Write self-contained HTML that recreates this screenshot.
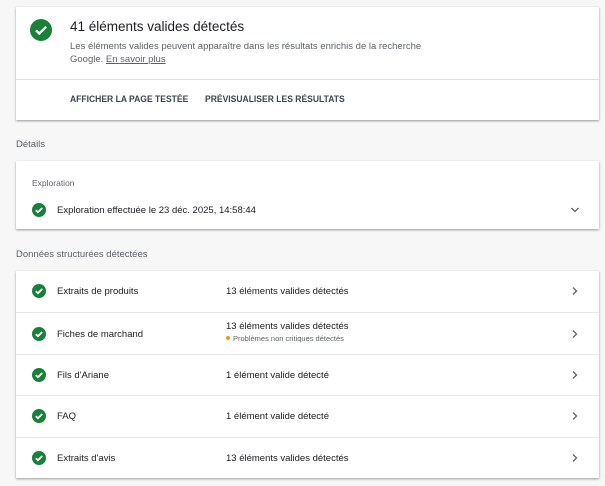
<!DOCTYPE html>
<html><head><meta charset="utf-8"><style>
*{margin:0;padding:0;box-sizing:border-box}
body{width:605px;height:486px;background:#f7f7f7;font-family:"Liberation Sans",Arial,sans-serif;color:#202124;position:relative;overflow:hidden}
.card{position:absolute;left:16px;width:583px;background:#fff;box-shadow:0 1px 2px rgba(0,0,0,.3),0 1px 3px rgba(0,0,0,.1)}
.abs{position:absolute;white-space:nowrap}
.row{position:absolute;left:0;width:583px;height:41px;border-top:1px solid #e8e8e8}
.row:first-child{border-top:none}
.t{font-size:9.5px}
.btn{font-size:9.5px;font-weight:bold;color:#3c4650;transform:scaleX(0.9);transform-origin:left}
</style></head><body>
<div class="card" style="top:7px;height:113px">
 <svg class="abs" style="left:14px;top:12px" width="22" height="22" viewBox="0 0 22 22"><circle cx="11" cy="11" r="11" fill="#188038"/><path d="M6 11.3l3.3 3.3 6.8-6.8" stroke="#fff" stroke-width="2.4" fill="none"/></svg>
 <div class="abs" style="left:54px;top:12px;font-size:13.5px">41 éléments valides détectés</div>
 <div class="abs" style="left:54px;top:33px;font-size:9.5px;color:#5f6368;line-height:13px">Les éléments valides peuvent apparaître dans les résultats enrichis de la recherche<br>Google. <u>En savoir plus</u></div>
 <div class="abs" style="left:0;top:72px;width:583px;border-top:1px solid #e0e0e0"></div>
 <div class="abs btn" style="left:54px;top:87px">AFFICHER LA PAGE TESTÉE</div>
 <div class="abs btn" style="left:189px;top:87px">PRÉVISUALISER LES RÉSULTATS</div>
</div>
<div class="abs" style="left:16px;top:139px;font-size:9.5px;color:#5f6368">Détails</div>
<div class="card" style="top:161px;height:68px">
 <div class="abs" style="left:16px;top:17px;font-size:8.5px;color:#5f6368">Exploration</div>
 <svg class="abs" style="left:16px;top:42px" width="14" height="14" viewBox="0 0 22 22"><circle cx="11" cy="11" r="11" fill="#188038"/><path d="M6 11.3l3.3 3.3 6.8-6.8" stroke="#fff" stroke-width="2.8" fill="none"/></svg>
 <div class="abs t" style="left:41px;top:44px">Exploration effectuée le 23 déc. 2025, 14:58:44</div>
 <svg class="abs" style="top:45px;left:554px" width="10" height="8" viewBox="0 0 10 8"><path d="M1.5 2l3.5 3.5 3.5-3.5" stroke="#5f6368" stroke-width="1.3" fill="none"/></svg>
</div>
<div class="abs" style="left:16px;top:249px;font-size:9.5px;color:#5f6368">Données structurées détectées</div>
<div class="card" style="top:271px;height:207px">
 <div class="row" style="top:0"><svg class="abs" style="left:16px;top:13px" width="14" height="14" viewBox="0 0 22 22"><circle cx="11" cy="11" r="11" fill="#188038"/><path d="M6 11.3l3.3 3.3 6.8-6.8" stroke="#fff" stroke-width="2.8" fill="none"/></svg><div class="abs t" style="left:41px;top:15px">Extraits de produits</div><div class="abs t" style="left:210px;top:15px">13 éléments valides détectés</div><svg class="abs" style="left:555px;top:15px" width="8" height="10" viewBox="0 0 8 10"><path d="M2 1.5l3.5 3.5-3.5 3.5" stroke="#5f6368" stroke-width="1.3" fill="none"/></svg></div>
 <div class="row" style="top:41px;height:42px"><svg class="abs" style="left:16px;top:14px" width="14" height="14" viewBox="0 0 22 22"><circle cx="11" cy="11" r="11" fill="#188038"/><path d="M6 11.3l3.3 3.3 6.8-6.8" stroke="#fff" stroke-width="2.8" fill="none"/></svg><div class="abs t" style="left:41px;top:16px">Fiches de marchand</div><div class="abs t" style="left:210px;top:8px">13 éléments valides détectés</div><div class="abs" style="left:210px;top:21px;font-size:7.5px;color:#5f6368"><span style="display:inline-block;width:4px;height:4px;border-radius:2px;background:#f29900;margin-right:3px;vertical-align:1px"></span>Problèmes non critiques détectés</div><svg class="abs" style="left:555px;top:16px" width="8" height="10" viewBox="0 0 8 10"><path d="M2 1.5l3.5 3.5-3.5 3.5" stroke="#5f6368" stroke-width="1.3" fill="none"/></svg></div>
 <div class="row" style="top:83px"><svg class="abs" style="left:16px;top:13px" width="14" height="14" viewBox="0 0 22 22"><circle cx="11" cy="11" r="11" fill="#188038"/><path d="M6 11.3l3.3 3.3 6.8-6.8" stroke="#fff" stroke-width="2.8" fill="none"/></svg><div class="abs t" style="left:41px;top:15px">Fils d'Ariane</div><div class="abs t" style="left:210px;top:15px">1 élément valide détecté</div><svg class="abs" style="left:555px;top:15px" width="8" height="10" viewBox="0 0 8 10"><path d="M2 1.5l3.5 3.5-3.5 3.5" stroke="#5f6368" stroke-width="1.3" fill="none"/></svg></div>
 <div class="row" style="top:124px"><svg class="abs" style="left:16px;top:13px" width="14" height="14" viewBox="0 0 22 22"><circle cx="11" cy="11" r="11" fill="#188038"/><path d="M6 11.3l3.3 3.3 6.8-6.8" stroke="#fff" stroke-width="2.8" fill="none"/></svg><div class="abs t" style="left:41px;top:15px">FAQ</div><div class="abs t" style="left:210px;top:15px">1 élément valide détecté</div><svg class="abs" style="left:555px;top:15px" width="8" height="10" viewBox="0 0 8 10"><path d="M2 1.5l3.5 3.5-3.5 3.5" stroke="#5f6368" stroke-width="1.3" fill="none"/></svg></div>
 <div class="row" style="top:166px"><svg class="abs" style="left:16px;top:13px" width="14" height="14" viewBox="0 0 22 22"><circle cx="11" cy="11" r="11" fill="#188038"/><path d="M6 11.3l3.3 3.3 6.8-6.8" stroke="#fff" stroke-width="2.8" fill="none"/></svg><div class="abs t" style="left:41px;top:15px">Extraits d'avis</div><div class="abs t" style="left:210px;top:15px">13 éléments valides détectés</div><svg class="abs" style="left:555px;top:15px" width="8" height="10" viewBox="0 0 8 10"><path d="M2 1.5l3.5 3.5-3.5 3.5" stroke="#5f6368" stroke-width="1.3" fill="none"/></svg></div>
</div>
</body></html>
